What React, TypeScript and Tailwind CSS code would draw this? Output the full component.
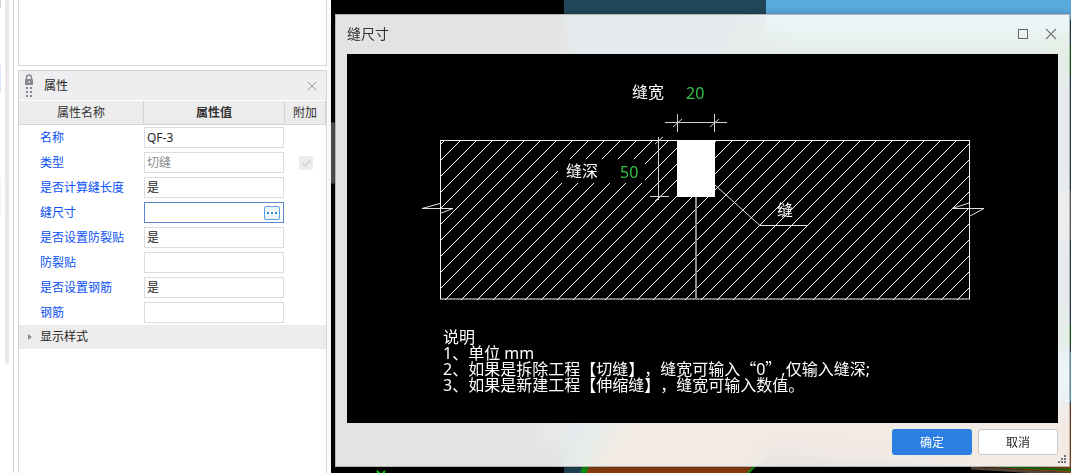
import { useState } from 'react';
import clsx from 'clsx';

type Property = {
    id: string;
    label: string;
    value: string;
    disabled?: boolean;
    picker?: boolean;
    extra?: boolean;
};

const PROPERTIES: Property[] = [
    { id: 'name', label: '名称', value: 'QF-3' },
    { id: 'type', label: '类型', value: '切缝', disabled: true, extra: true },
    { id: 'calc-length', label: '是否计算缝长度', value: '是' },
    { id: 'joint-size', label: '缝尺寸', value: '', picker: true },
    { id: 'use-sticker', label: '是否设置防裂贴', value: '是' },
    { id: 'sticker', label: '防裂贴', value: '' },
    { id: 'use-rebar', label: '是否设置钢筋', value: '是' },
    { id: 'rebar', label: '钢筋', value: '' },
];

// 45° hatch, one line every 16 units; each number is x + y of a line
const HATCH = Array.from({ length: 43 }, (_, i) => 585 + i * 16);

function CloseIcon({ className }: { className?: string }) {
    return (
        <svg viewBox="0 0 12 12" className={className} fill="none" stroke="currentColor" aria-hidden="true">
            <path d="M1 1L11 11M11 1L1 11" strokeWidth="1.1" />
        </svg>
    );
}

function LockGrip() {
    return (
        <svg viewBox="0 0 10 24" className="w-2.5 h-6" aria-hidden="true">
            <path d="M2.5 6V3.5a2.5 2.5 0 0 1 5 0V6" fill="none" stroke="#85868b" strokeWidth="1.3" />
            <rect x="1" y="5" width="8" height="6" rx="1" fill="#85868b" />
            <rect x="4" y="7" width="2" height="2" fill="#c9cacd" />
            <path d="M2 13h2v2H2zM6 13h2v2H6zM2 17h2v2H2zM6 17h2v2H6zM2 21h2v2H2zM6 21h2v2H6z" fill="#85868b" />
        </svg>
    );
}

function PropertyRow({ item }: { item: Property }) {
    return (
        <tr className="h-[25px]">
            <th scope="row" className="pl-[21px] text-left font-normal text-[#0a50f5]">
                <label htmlFor={item.id}>{item.label}</label>
            </th>
            <td>
                <div
                    className={clsx(
                        'flex items-center h-[21px] w-[140px] border bg-white',
                        item.picker ? 'border-[#5b87d0]' : 'border-[#dcdcdc]'
                    )}
                >
                    <input
                        id={item.id}
                        type="text"
                        defaultValue={item.value}
                        disabled={item.disabled}
                        className="min-w-0 flex-1 px-0.5 outline-none text-[#262626] disabled:text-[#8c8c8c]"
                    />
                    {item.picker && (
                        <button
                            type="button"
                            aria-label="编辑缝尺寸"
                            className="flex items-center justify-center gap-0.5 w-4 h-3.5 mr-[3px] rounded-[2px] border border-[#5ba0dc] bg-[#eef6fd]"
                        >
                            <span className="w-0.5 h-0.5 bg-[#3a86d6]" />
                            <span className="w-0.5 h-0.5 bg-[#3a86d6]" />
                            <span className="w-0.5 h-0.5 bg-[#3a86d6]" />
                        </button>
                    )}
                </div>
            </td>
            <td className="text-center">
                {item.extra && (
                    <span className="relative inline-block w-3.5 h-3.5 align-middle">
                        <input
                            type="checkbox"
                            defaultChecked
                            disabled
                            aria-label={`附加 ${item.label}`}
                            className="block appearance-none w-3.5 h-3.5 rounded-[2px] bg-[#ececec]"
                        />
                        <svg viewBox="0 0 14 14" className="absolute inset-0" fill="none" aria-hidden="true">
                            <path d="M3 7l3 3 5.5-6" stroke="#d6d6d6" strokeWidth="1.8" />
                        </svg>
                    </span>
                )}
            </td>
        </tr>
    );
}

function PropertyPanel() {
    const [expanded, setExpanded] = useState(false);

    return (
        <section className="flex-1 mt-1 border border-b-0 border-[#d4d4d4] bg-white">
            <header className="flex items-center h-[30px] bg-[#eeeef0] border-b border-white pl-[5px] pr-[9px]">
                <LockGrip />
                <h2 className="ml-[10px] flex-1 text-[#262626]">属性</h2>
                <button type="button" aria-label="关闭" className="text-[#8f8f8f]">
                    <CloseIcon className="w-2.5 h-2.5" />
                </button>
            </header>
            <table className="w-full table-fixed border-separate border-spacing-0">
                <colgroup>
                    <col className="w-[125px]" />
                    <col />
                    <col className="w-[41px]" />
                </colgroup>
                <thead>
                    <tr className="h-6 bg-[#ececec] text-[#333]">
                        <th className="font-normal border-r border-b border-[#d4d4d4]">属性名称</th>
                        <th className="font-bold border-r border-b border-[#d4d4d4]">属性值</th>
                        <th className="font-normal border-r border-b border-[#d4d4d4]">附加</th>
                    </tr>
                </thead>
                <tbody>
                    {PROPERTIES.map((item) => (
                        <PropertyRow key={item.id} item={item} />
                    ))}
                    <tr className="h-6 bg-[#ececec]">
                        <td colSpan={3}>
                            <button
                                type="button"
                                aria-expanded={expanded}
                                onClick={() => setExpanded(!expanded)}
                                className="flex items-center gap-2 w-full pl-[9px] text-left text-[#262626]"
                            >
                                <svg viewBox="0 0 4 6" className="w-1 h-1.5" fill="#8a8a8a" aria-hidden="true">
                                    <path d="M0 0L4 3L0 6Z" />
                                </svg>
                                <span>显示样式</span>
                            </button>
                        </td>
                    </tr>
                </tbody>
            </table>
        </section>
    );
}

function Sidebar() {
    return (
        <aside className="flex shrink-0 w-[331px] bg-white">
            {/* Edge of the neighbouring list with its scrollbar */}
            <div className="flex w-3.5 border-r border-[#d0d0d0]">
                <div className="w-px">
                    <div className="h-2 bg-[#d4d4d4]" />
                    <div className="h-7 mt-[57px] bg-[#d9e8fb]" />
                    <div className="h-10 mt-[85px] bg-[#f2f2f8]" />
                </div>
                <div className="w-1 h-[364px] ml-1 rounded-b-sm bg-[#e8e8e8]" />
            </div>
            <div className="flex flex-col flex-1 ml-1 mr-1">
                <div className="h-[66px] border border-t-0 border-[#d4d4d4] bg-white" />
                <PropertyPanel />
            </div>
        </aside>
    );
}

function ModelScene() {
    return (
        <svg
            viewBox="0 0 740 473"
            preserveAspectRatio="xMinYMin slice"
            className="absolute inset-0 w-full h-full"
            aria-hidden="true"
        >
            <rect width="740" height="473" fill="#000" />
            <rect x="233" width="507" height="473" fill="#20465a" />
            <rect x="435" width="305" height="34" fill="#58abdc" />
            <path d="M425 34H740V56H410Z" fill="#1c6a10" />
            <rect x="739" y="20" width="1" height="26" fill="#1b4152" />
            <rect x="730" y="46" width="10" height="28" fill="#046a04" />
            <rect x="722" y="190" width="18" height="50" fill="#666" />
            <rect x="722" y="325" width="18" height="20" fill="#0a7a0a" />
            <rect x="722" y="352" width="18" height="50" fill="#58abdc" />
            <path d="M212 418H226V444H212Z" fill="#777" />
            <path d="M254 473Q272 430 300 405H740V473Z" fill="#90400f" />
            <path d="M252 473Q270 428 300 403" fill="none" stroke="#0d9a12" strokeWidth="6" />
            <path d="M417 473L436 454L640 466L740 473Z" fill="#000" />
            <path d="M417 473L436 454" stroke="#0d9a12" strokeWidth="2" />
            <path d="M640 468L740 474" stroke="#5d4a3c" strokeWidth="3" />
            <path d="M660 466L740 470" stroke="#0a7a0a" strokeWidth="2" />
            <path d="M46 471L50 475L54 471" fill="none" stroke="#00e000" strokeWidth="2" />
            <rect y="122" width="4" height="62" rx="2" fill="#555" />
        </svg>
    );
}

function JointDrawing() {
    return (
        <svg
            viewBox="347 54 711 369"
            className="block w-full h-auto bg-black font-['Noto_Sans','Noto_Sans_CJK_SC',sans-serif] [text-spacing-trim:space-all]"
            role="img"
            aria-label="缝尺寸示意图"
        >
            <clipPath id="slab">
                <rect x="440" y="140" width="530" height="160" />
            </clipPath>
            <g clipPath="url(#slab)" stroke="#fff" shapeRendering="crispEdges">
                {HATCH.map((c) => (
                    <line key={c} x1={c - 139} y1="139" x2={c - 301} y2="301" />
                ))}
            </g>
            <rect x="558" y="159" width="87" height="24" fill="#000" />
            <rect x="440.5" y="140.5" width="529" height="158.5" fill="none" stroke="#f0f0f0" />
            <line x1="696" y1="197" x2="696" y2="299" stroke="#8c8c8c" strokeWidth="2" />
            <rect x="677" y="140" width="38" height="57" fill="#fff" />

            {/* Dimension lines */}
            <g fill="none" stroke="#d0d0d0">
                <path d="M665 122.5H727M677.5 114V132M714.5 114V132" />
                <path d="M673 127L682 119M710 127L719 119" />
                <path d="M658.5 137V200M650 196.5H669" />
                <path d="M655 144L663 137M655 201L663 194" />
            </g>

            {/* Leader and break marks */}
            <g fill="none" stroke="#e0e0e0">
                <path d="M715 185L760 225.5H808" />
                <path d="M440 203.5L422 208.5H453L440 213.5" />
                <path d="M969 203L952 208.5H984L970 216" />
            </g>

            <g fill="#fff" fontSize="16">
                <text x="632" y="98">缝宽</text>
                <text x="566" y="177">缝深</text>
                <text x="777" y="216">缝</text>
                <text x="443" y="343">说明</text>
                <text x="443" y="359">1、单位 mm</text>
                <text x="443" y="375">
                    2、如果是拆除工程【切缝】，缝宽可输入
                    <tspan className="font-['Noto_Sans_CJK_SC',sans-serif]">“</tspan>0
                    <tspan className="font-['Noto_Sans_CJK_SC',sans-serif]">”</tspan>,仅输入缝深;
                </text>
                <text x="443" y="391">3、如果是新建工程【伸缩缝】，缝宽可输入数值。</text>
            </g>
            <g fill="#35c24a" fontSize="16">
                <text x="686" y="99">20</text>
                <text x="620" y="178">50</text>
            </g>
        </svg>
    );
}

function JointSizeDialog() {
    return (
        <div
            role="dialog"
            aria-labelledby="dialog-title"
            className="relative px-[11px] border border-[#b4b4b4] bg-white/89 backdrop-blur-md shadow-[0_1px_8px_rgba(0,0,0,0.35)]"
        >
            <header className="flex items-center h-[39px] pb-0.5">
                <h1 id="dialog-title" className="flex-1 text-sm text-[#333]">缝尺寸</h1>
                <button type="button" aria-label="最大化" className="w-2.5 h-2.5 border border-[#666]" />
                <button type="button" aria-label="关闭" className="ml-[17px] mr-px text-[#777]">
                    <CloseIcon className="w-3 h-3" />
                </button>
            </header>
            <JointDrawing />
            <footer className="flex justify-end gap-1.5 pt-1.5 pb-[11px]">
                <button type="button" className="w-20 h-[26px] pt-0.5 rounded-[3px] bg-[#2b7fe3] text-white">
                    确定
                </button>
                <button type="button" className="w-20 h-[26px] pt-0.5 rounded-[3px] border border-[#c8c8c8] bg-white text-[#262626]">
                    取消
                </button>
            </footer>
            <svg viewBox="0 0 8 8" className="absolute right-[3px] bottom-[3px] w-2 h-2" fill="#6c6f74" aria-hidden="true">
                <path d="M6 0h2v2H6zM3 3h2v2H3zM6 3h2v2H6zM0 6h2v2H0zM3 6h2v2H3zM6 6h2v2H6z" />
            </svg>
        </div>
    );
}

export default function App() {
    return (
        <div
            lang="zh-CN"
            className="flex min-h-screen overflow-hidden bg-white text-xs font-['Noto_Sans','Noto_Sans_CJK_SC',sans-serif]"
        >
            <Sidebar />
            <main className="relative flex-1 pt-3.5 pl-1 pr-px pb-1.5">
                <ModelScene />
                <JointSizeDialog />
            </main>
        </div>
    );
}
